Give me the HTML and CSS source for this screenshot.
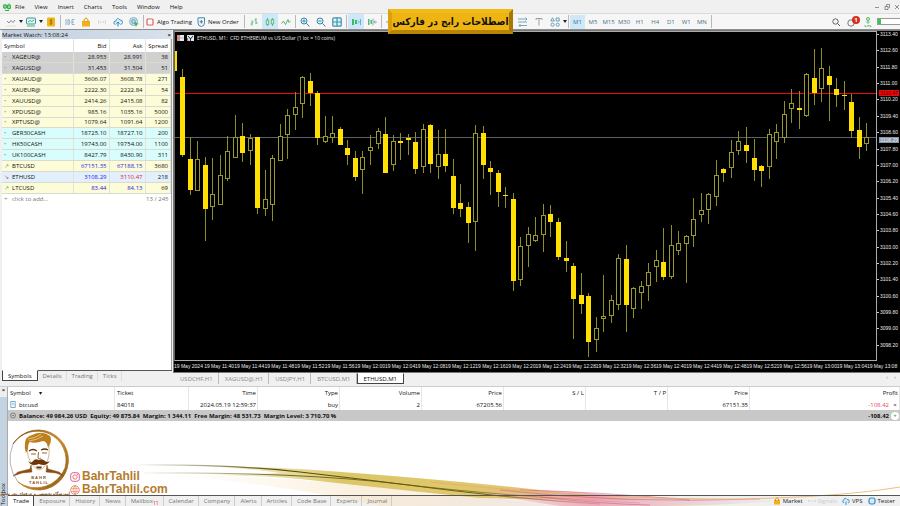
FILE: index.html
```html
<!DOCTYPE html>
<html lang="en">
<head>
<meta charset="utf-8">
<title>Trading terminal</title>
<link rel="stylesheet" href="styles.css">
</head>
<body>
<div class="app">
  <nav class="menubar">
    <svg class="ico" viewBox="0 0 10 10"><path d="M3 2v5M1.500 3h3v3h-3zM7 1.500v6M5.500 3h3v3.500h-3z" fill="none" stroke="#35b34a"/><path d="M3 8.500h4" stroke="#35b34a"/></svg>
    <button>File</button><button>View</button><button>Insert</button><button>Charts</button><button>Tools</button><button>Window</button><button>Help</button>
    <span class="grow"></span>
    <div class="winbtns">
      <button aria-label="Minimize"><svg viewBox="0 0 6 6"><path d="M1 3.500h4"/></svg></button>
      <button aria-label="Restore"><svg viewBox="0 0 6 6"><path d="M1 2.500h3v3h-3zM2.500 2v-1.500h3v3h-1"/></svg></button>
      <button aria-label="Close"><svg viewBox="0 0 6 6"><path d="M1 1l4 4M5 1l-4 4"/></svg></button>
    </div>
  </nav>

  <div class="toolbar">
    <button class="tb" aria-label="Line style"><svg class="ico" viewBox="0 0 10 10"><path d="M1 4l2 2 2-2.500 2 2L9 3" fill="none" stroke="#7c8a94"/><path d="M0 9h10" stroke="#dde3e6"/></svg></button>
    <span class="caret"></span>
    <button class="tb" aria-label="Chart window"><svg class="ico" viewBox="0 0 10 10"><rect x=".5" y="1" width="9" height="6" rx="1" fill="#e2f3f4" stroke="#3f93a5"/><path d="M2 5l2-1.500 1.500 1L8 3" fill="none" stroke="#45b36b"/><path d="M1 9h8" stroke="#45b36b"/></svg></button>
    <span class="caret"></span>
    <button class="tb" aria-label="Quotes"><svg class="ico" viewBox="0 0 10 10"><rect x="1" y=".5" width="8" height="9" rx="1" fill="#f2b417"/><path d="M6.500 3h-2q-1 1 0 1.800h1q1.200 1 0 2H3.500M5 2v6" fill="none" stroke="#9a6700" stroke-width=".8"/></svg></button>
    <span class="sep"></span>
    <button class="tb" aria-label="IDE"><svg class="ico" viewBox="0 0 10 10"><path d="M1 2v6M3 2.500v5h1q2-2.500 0-5zM9.500 2.500h-2.500v5h2.500M7 5h2" fill="none" stroke="#82a9c4" stroke-width=".9"/></svg></button>
    <button class="tb" aria-label="Market"><svg class="ico" viewBox="0 0 10 10"><path d="M1 4h8v5.500h-8z" fill="#f2b11a"/><path d="M3 5V3q2-4 4 0v2" fill="none" stroke="#d9940b"/></svg></button>
    <button class="tb" aria-label="Signals"><svg class="ico" viewBox="0 0 10 10"><path d="M2 3q-1.500 2 0 4M8 3q1.500 2 0 4M3.800 4q-.7 1 0 2M6.200 4q.7 1 0 2" fill="none" stroke="#c9ced1" stroke-width=".8"/></svg></button>
    <button class="tb" aria-label="VPS"><svg class="ico" viewBox="0 0 10 10"><path d="M2.500 7.500Q0 7 1 4.800 2 4 3 4 4-.5 7 3q3 0 2.500 2.500-.5 2-2 2" fill="#d6eefb" stroke="#4a9ac4"/><path d="M5 9.500V5M3.500 6.500L5 5l1.500 1.500" fill="none" stroke="#2f84b3"/></svg></button>
    <button class="tb" aria-label="Community"><svg class="ico" viewBox="0 0 10 10"><circle cx="4.500" cy="4.500" r="4" fill="#c9e1ee" stroke="#8ab3c9"/><circle cx="4.500" cy="4.500" r="1.800" fill="none" stroke="#5a94b5"/><path d="M5 5l5 2-2 .6L7 10z" fill="#36b24a"/></svg></button>
    <span class="sep"></span>
    <button class="tb-text"><svg class="ico" viewBox="0 0 10 10"><rect x="2" y="2" width="6" height="6" rx="1" fill="#fff" stroke="#df6157" stroke-width="1.200"/></svg>Algo Trading</button>
    <button class="tb-text"><svg class="ico" viewBox="0 0 10 10"><path d="M2 .8h6.500v5q0 3.500-3.200 3.700Q2 9 2 6z" fill="#eef7fb" stroke="#4c87a5"/><path d="M5.300 3v3.500M3.600 4.800h3.400" stroke="#3c7d9e"/></svg>New Order</button>
    <span class="sep"></span>
    <button class="tb" aria-label="Bar chart"><svg class="ico" viewBox="0 0 10 10"><path d="M3 3.500v5M1.500 7H3M3 5h1.500M7 1v6M5.500 3H7M7 6h1.500" fill="none" stroke="#5bb377" stroke-width=".9"/></svg></button>
    <button class="tb on" aria-label="Candles"><svg class="ico" viewBox="0 0 10 10"><path d="M2.500 1v8M7.500 1v8" stroke="#4cab6c" stroke-width=".8"/><path d="M1.300 3h2.400v4.500H1.300zM6.300 2.500h2.400V7H6.300z" fill="#c8f0d8" stroke="#4cab6c" stroke-width=".8"/></svg></button>
    <button class="tb" aria-label="Line chart"><svg class="ico" viewBox="0 0 10 10"><path d="M.5 6.500L2.500 4l2 3.500L7 2.500l1 3L9.500 4" fill="none" stroke="#5bb377"/></svg></button>
    <span class="sep"></span>
    <button class="tb" aria-label="Zoom in"><svg class="ico" viewBox="0 0 10 10"><circle cx="4" cy="4" r="3" fill="#dff1fa" stroke="#3c86ad"/><path d="M6.300 6.300L9.500 9.500M2.500 4h3M4 2.500v3" stroke="#3c86ad"/></svg></button>
    <button class="tb" aria-label="Zoom out"><svg class="ico" viewBox="0 0 10 10"><circle cx="4" cy="4" r="3" fill="#dff1fa" stroke="#3c86ad"/><path d="M6.300 6.300L9.500 9.500M2.500 4h3" stroke="#3c86ad"/></svg></button>
    <button class="tb" aria-label="Tile"><svg class="ico" viewBox="0 0 10 10"><rect x=".8" y=".8" width="8.400" height="8.400" rx="1" fill="#dff1fa" stroke="#3d93a8" stroke-width="1.200"/><path d="M5 1v8M1 5h8" stroke="#3d93a8" stroke-width="1.200"/></svg></button>
    <span class="sep"></span>
    <button class="tb on" aria-label="Auto scroll"><svg class="ico" viewBox="0 0 10 10"><path d="M1 2h2v6H1zM4 3h2v4H4z" fill="#3fb865"/><path d="M7 3.500L8.500 5 7 6.500M9.500 2v6" fill="none" stroke="#5a9fb9" stroke-width=".8"/></svg></button>
    <button class="tb" aria-label="Chart shift"><svg class="ico" viewBox="0 0 10 10"><path d="M1 2h1.500v6H1zM3.500 3H5v4H3.500z" fill="#56bb75"/><path d="M6 1.500v7M10 5H7M8.300 3.500L7 5l1.300 1.500" fill="none" stroke="#7a9aa6" stroke-width=".8"/></svg></button>
    <span class="sep"></span>
    <button class="tb" aria-label="Indicators"><svg class="ico" viewBox="0 0 10 10"><path d="M2 2h8v6H2z" fill="#f3b61c"/><path d="M0 5h2" stroke="#999"/></svg></button>
    <div class="objects">
      <button class="tb" aria-label="Levels"><svg class="ico" viewBox="0 0 10 10"><path d="M0 2h9M0 5h9M1 8.500h8M7.500.5L9 2 7.500 3.500M2.500 7L1 8.500 2.500 10" fill="none" stroke="#6f9cb2" stroke-width=".9"/></svg></button>
      <button class="tb" aria-label="Text"><svg class="ico" viewBox="0 0 10 10"><path d="M2 3V1.500h6V3M5 1.500V8.500" fill="none" stroke="#8d9aa2" stroke-width=".9"/></svg></button>
      <button class="tb" aria-label="Shapes"><svg class="ico" viewBox="0 0 10 10"><path d="M2.500.8L4.300 4H.7zM6.200 1h3v3h-3z" fill="none" stroke="#6099b2" stroke-width=".9"/><circle cx="2.500" cy="7.700" r="1.600" fill="none" stroke="#6099b2" stroke-width=".9"/><circle cx="7.700" cy="7.700" r="1.600" fill="none" stroke="#6099b2" stroke-width=".9"/></svg></button>
    </div>
    <span class="caret"></span>
    <span class="sep"></span>
    <div class="frames">
      <button class="on">M1</button><button>M5</button><button>M15</button><button>M30</button><button>H1</button><button>H4</button><button>D1</button><button>W1</button><button>MN</button>
    </div>
    <span class="sep"></span>
    <span class="grow"></span>
    <button class="tb" aria-label="Search"><svg class="ico" viewBox="0 0 10 10"><circle cx="4.500" cy="4.500" r="2.700" fill="none" stroke="#555" stroke-width=".9"/><path d="M6.500 6.500L9 9" stroke="#555"/></svg></button>
    <button class="tb bell" aria-label="Notifications"><svg class="ico" viewBox="0 0 10 10"><circle cx="4" cy="6" r="3.200" fill="none" stroke="#777"/></svg><span class="badge">1</span></button>
    <button class="tb" aria-label="Level"><svg class="ico" viewBox="0 0 10 10"><circle cx="5" cy="2" r="1.500" fill="none" stroke="#4db562"/><path d="M5 3v3M3 4.500l2 2 2-2M2 8v1.500h1.500M4.500 8l.7 1.500L6 8M7 8v1.500h1.500" fill="none" stroke="#4db562" stroke-width=".8"/></svg></button>
    <div class="meter"><span></span></div>
  </div>

  <main class="main">
    <section class="watch">
      <div class="watch-title"><span>Market Watch: 13:08:24</span><button class="x" aria-label="Close">×</button></div>
      <div class="watch-body">
        <table class="quotes">
          <colgroup><col class="c-sym"><col class="c-val"><col class="c-val"><col class="c-spr"></colgroup>
          <thead><tr><th>Symbol</th><th>Bid</th><th>Ask</th><th>Spread</th></tr></thead>
          <tbody>
            <tr class="metal"><td><i>•</i>XAGEUR@</td><td>28.953</td><td>28.991</td><td>38</td></tr>
            <tr class="metal"><td><i>•</i>XAGUSD@</td><td>31.453</td><td>31.504</td><td>51</td></tr>
            <tr class="gold"><td><i>•</i>XAUAUD@</td><td>3606.07</td><td>3608.78</td><td>271</td></tr>
            <tr class="gold"><td><i>•</i>XAUEUR@</td><td>2222.30</td><td>2222.84</td><td>54</td></tr>
            <tr class="gold"><td><i>•</i>XAUUSD@</td><td>2414.26</td><td>2415.08</td><td>82</td></tr>
            <tr class="gold"><td><i>•</i>XPDUSD@</td><td>985.16</td><td>1035.16</td><td>5000</td></tr>
            <tr class="gold"><td><i>•</i>XPTUSD@</td><td>1079.64</td><td>1091.64</td><td>1200</td></tr>
            <tr class="index"><td><i>•</i>GER30CASH</td><td>18725.10</td><td>18727.10</td><td>200</td></tr>
            <tr class="index"><td><i>•</i>HK50CASH</td><td>19743.00</td><td>19754.00</td><td>1100</td></tr>
            <tr class="index"><td><i>•</i>UK100CASH</td><td>8427.79</td><td>8430.90</td><td>311</td></tr>
            <tr class="gold"><td><i class="up">↗</i>BTCUSD</td><td class="blue">67151.35</td><td class="blue">67188.15</td><td>3680</td></tr>
            <tr class="sel"><td><i class="down">↘</i>ETHUSD</td><td class="blue">3108.29</td><td class="red">3110.47</td><td>218</td></tr>
            <tr class="gold"><td><i class="up">↗</i>LTCUSD</td><td class="blue">83.44</td><td class="blue">84.13</td><td>69</td></tr>
            <tr class="add"><td colspan="2"><i class="up">+</i>click to add...</td><td colspan="2">13 / 245</td></tr>
          </tbody>
        </table>
      </div>
      <div class="watch-tabs"><button class="on">Symbols</button><button>Details</button><button>Trading</button><button>Ticks</button></div>
    </section>

    <section class="chart-side">
      <div class="chart">
        <div class="plot">
          <svg id="plot" viewBox="175 32 701 328" preserveAspectRatio="none"></svg>
          <div class="chart-title">
            <svg viewBox="0 0 7 6"><path d="M0 0h7v6H0z" fill="#d9eef8"/><path d="M0 0h3v6H0z" fill="#e58d7b"/><path d="M0 3h7" stroke="#888" stroke-width=".5"/></svg>
            <svg viewBox="0 0 7 6"><path d="M0 0h7v6H0z" fill="#dfeaf0"/><path d="M1 1l2.500 3L6 1M3.500 3v3" fill="none" stroke="#234" stroke-width="1"/><path d="M0 3l1 3" stroke="#c33"/></svg>
            <span>ETHUSD, M1:&nbsp; CFD ETHEREUM vs US Dollar (1 lot = 10 coins)</span>
          </div>
        </div>
        <div class="prices"><div class="price-list" id="prices"></div><span class="tag ask">3110.47</span><span class="tag bid">3108.29</span></div>
        <div class="times" id="times"></div>
      </div>
      <div class="chart-tabs"><button>USDCHF,H1</button><button>XAGUSD@,H1</button><button>USDJPY,H1</button><button>BTCUSD,M1</button><button class="on">ETHUSD,M1</button><span class="grow"></span><span class="pager">‹&nbsp;&nbsp;&nbsp;&nbsp;›</span></div>
    </section>
  </main>

  <section class="toolbox">
    <div class="strip"><button class="x" aria-label="Close toolbox">×</button><span>Toolbox</span></div>
    <div class="tool-main">
      <table class="trades">
        <colgroup><col class="w108"><col class="w74"><col class="w69"><col class="w82"><col class="w82"><col class="w82"><col class="w82"><col class="w82"><col class="w82"><col></colgroup>
        <thead><tr><th class="l">Symbol<span class="sort">▾</span></th><th class="l">Ticket</th><th>Time</th><th>Type</th><th>Volume</th><th>Price</th><th>S / L</th><th>T / P</th><th>Price</th><th>Profit</th></tr></thead>
        <tbody>
          <tr><td class="l"><svg class="doc" viewBox="0 0 6 8"><path d="M.5.500h5v7h-5zM3 2v3" fill="#fff" stroke="#5aa0c8"/></svg>btcusd</td><td class="l">84018</td><td>2024.05.19 12:59:37</td><td>buy</td><td>2</td><td>67205.56</td><td></td><td></td><td>67151.35</td><td class="pl"><span class="loss">-108.42</span><button aria-label="Close position">×</button></td></tr>
          <tr class="balance"><td class="l" colspan="9"><svg class="doc" viewBox="0 0 6 6"><circle cx="3" cy="3" r="2.500" fill="none" stroke="#666" stroke-width=".7"/><path d="M1.800 3h2.400" stroke="#666" stroke-width=".7"/></svg>Balance: 49 984.26 USD&nbsp; Equity: 49 875.84&nbsp; Margin: 1 344.11&nbsp; Free Margin: 48 531.73&nbsp; Margin Level: 3 710.70 %</td><td class="pl"><span>-108.42</span><button class="plus" aria-label="Add">+</button></td></tr>
        </tbody>
      </table>
      <div class="tool-tabs">
        <button class="on">Trade</button><button>Exposure</button><button>History</button><button>News</button><button>Mailbox<sub>11</sub></button><button>Calendar</button><button>Company</button><button>Alerts</button><button>Articles</button><button>Code Base</button><button>Experts</button><button>Journal</button>
        <span class="grow"></span>
        <a href="#"><svg viewBox="0 0 8 8"><path d="M1 3h6v4.500H1z" fill="#f2b11a"/><path d="M2.500 4V2q1.500-2.500 3 0v2" fill="none" stroke="#d9940b"/></svg>Market</a>
        <a href="#" class="off"><svg viewBox="0 0 8 8"><path d="M1 3q-1 1 0 2M3 3.500v1M5 3.500v1M7 3q1 1 0 2" fill="none" stroke="#ccc"/></svg>Signals</a>
        <a href="#"><svg viewBox="0 0 8 8"><path d="M2 6Q0 5.500 1 3.800 3-.5 5 2.500q3 0 2.300 2.200Q7 6 6 6" fill="#d6eefb" stroke="#3f8fc0" stroke-width=".9"/><path d="M4 8V4.500" stroke="#3f8fc0"/></svg>VPS</a>
        <a href="#"><svg viewBox="0 0 8 8"><rect x="1" y="1" width="6" height="6" rx="2" fill="#d4ebf8" stroke="#338cc4" stroke-width="1.200"/></svg>Tester</a>
      </div>
    </div>

    <svg class="swoosh" viewBox="0 420 900 86" preserveAspectRatio="none">
      <defs>
        <linearGradient id="g1"><stop offset="0" stop-color="#e3cf80" stop-opacity="0"/><stop offset=".35" stop-color="#dcc666"/><stop offset=".75" stop-color="#dcc265" stop-opacity=".9"/><stop offset="1" stop-color="#e9a49a" stop-opacity=".3"/></linearGradient>
        <linearGradient id="g2"><stop offset="0" stop-color="#f2a7a0" stop-opacity="0"/><stop offset=".4" stop-color="#ea8f9f" stop-opacity=".7"/><stop offset="1" stop-color="#e3a2a0" stop-opacity="0"/></linearGradient>
        <linearGradient id="g3" gradientUnits="userSpaceOnUse" x1="130" x2="640"><stop offset="0" stop-color="#5b5711" stop-opacity="0"/><stop offset=".3" stop-color="#4d4b0c"/><stop offset=".7" stop-color="#75650f"/><stop offset="1" stop-color="#c0607c" stop-opacity=".5"/></linearGradient>
        <linearGradient id="g4"><stop offset="0" stop-color="#f8ead0" stop-opacity="0"/><stop offset=".5" stop-color="#f8e6c8" stop-opacity=".6"/><stop offset="1" stop-color="#f8ded0" stop-opacity=".4"/></linearGradient>
      </defs>
      <path d="M170 475Q300 476 500 499L560 506H380Q280 484 170 475z" fill="url(#g4)"/>
      <path d="M180 466Q250 466 300 469Q430 478 540 490L640 500Q560 500 480 498Q400 490 300 479Q270 476 200 475Q260 474 280 473Q240 467 180 466z" fill="url(#g1)"/>
      <path d="M130 465Q230 464 300 472T440 489T600 504" fill="none" stroke="url(#g3)" stroke-width="1.200"/>
      <path d="M144 473Q300 472 400 484T640 503" fill="none" stroke="url(#g3)" stroke-width=".8"/>
      <path d="M460 487Q540 489 600 494Q690 500 790 500Q720 506 660 506H560Q510 500 460 487z" fill="url(#g2)"/>
      <path d="M500 490Q620 504 760 499M520 490Q600 492 690 500M540 497Q600 504 650 505" fill="none" stroke="#c94f78" stroke-width=".8" stroke-opacity=".6"/>
      <path d="M430 482Q600 500 740 499Q840 497 900 487" fill="none" stroke="#e6b25c" stroke-width="1" stroke-opacity=".8"/>
    </svg>

    <div class="brand">
      <svg class="face" viewBox="0 0 62 62">
        <defs><linearGradient id="ring" x1="0" y1="0" x2="1" y2="1"><stop offset="0" stop-color="#7d4308"/><stop offset=".5" stop-color="#c98d2c"/><stop offset="1" stop-color="#8d5312"/></linearGradient></defs>
        <path d="M5 15A30 30 0 1 1 10 53A31 31 0 0 0 57 39A29 29 0 0 0 5 15z" fill="url(#ring)" stroke="url(#ring)" stroke-width=".8"/>
        <path d="M5 15Q-3 35 10 53" fill="none" stroke="#444" stroke-width=".4"/>
        <path d="M17 14Q17 8 24 6Q34 1 42 7Q44 10 42 15L40 19Q39 12 35 12Q27 15 22 13Q20 14 20 20L18 24Q16 19 17 14z" fill="#bd7e1e"/>
        <path d="M21 12Q29 11 35 7M20 10Q28 9 33 5" fill="none" stroke="#f5dca0" stroke-width=".7"/>
        <path d="M19 18Q19 28 23 34Q27 40 31 41Q36 40 38 35Q42 28 41 17" fill="none" stroke="#b98a4c" stroke-width=".6"/>
        <path d="M21 22q4-3 8 0M33 21q4-2 7 0" fill="none" stroke="#5b3208" stroke-width="1.300"/>
        <path d="M23 25h5M34 24h5M30.500 23l-.5 6q1 1.500 3 0" fill="none" stroke="#8d5615" stroke-width=".9"/>
        <path d="M31 31Q27 29 25 32Q23 35 20 32Q23 38 31 35Q38 38 42 32Q39 34 37 32Q34 29 31 31z" fill="#6b370a"/>
        <path d="M28 37.500h6l-1 2h-4z" fill="#6b370a"/>
        <path d="M23 36L22 40L10 43L5 47L14 44L24 43zM39 36L40 40L51 43L56 47L48 44L38 43z" fill="#8a4d14" stroke="#8a4d14" stroke-width=".5"/>
      </svg>
      <div class="face-name"><b>BAHR</b><b>TAHLIL</b></div>
      <div class="face-tag" lang="fa" dir="rtl">آموزشگاه تخصصی و حرفه‌ای بحر تحلیل</div>
    </div>
    <div class="links">
      <a href="#"><svg viewBox="0 0 10 10"><rect x=".7" y=".7" width="8.600" height="8.600" rx="2.500" fill="none" stroke="#dc5a9a"/><circle cx="5" cy="5" r="2.200" fill="none" stroke="#ea7a6a"/><circle cx="7.500" cy="2.500" r=".6" fill="#b74bc9"/></svg>BahrTahlil</a>
      <a href="#"><svg viewBox="0 0 10 10"><circle cx="5" cy="5" r="4.300" fill="none" stroke="#e7835f" stroke-width=".9"/><path d="M1 3.500h8M1 6.500h8M5 .7v8.600M5 .7q-4 4.300 0 8.600M5 .7q4 4.300 0 8.600" fill="none" stroke="#e7835f" stroke-width=".6"/></svg>BahrTahlil.com</a>
    </div>
  </section>

  <div class="banner" lang="fa" dir="rtl">اصطلاحات رایج در فارکس</div>
</div>
<script src="chart.js"></script>
</body>
</html>
```
FILE: styles.css
```css
* { box-sizing: border-box; }
body {
  margin: 0;
  font: 6px/8px "Open Sans", "Noto Sans", sans-serif;
  color: #111;
  background: #f0f0f0;
}
button { appearance: none; border: 0; margin: 0; padding: 0; background: none; font: inherit; color: inherit; }
a { color: inherit; text-decoration: none; }
svg { display: block; }
.grow { flex: 1; }
.x { font-weight: bold; color: #111; }
.app { position: relative; display: grid; grid-template-rows: 13px 17px 1fr 120px; height: 100vh; overflow: hidden; }
.ico { width: 10px; height: 10px; flex: none; }

/* Menu and toolbar */
.menubar { display: flex; align-items: center; gap: 10px; padding: 0 0 0 2px; }
.menubar > .ico { margin: 0 -7px 0 0; width: 10px; }
.winbtns { display: flex; gap: 4px; }
.winbtns svg { width: 6px; height: 6px; fill: none; stroke: #777; stroke-width: .8; }

.toolbar { display: flex; align-items: center; padding-left: 3px; border-top: 1px solid #dcdcdc; border-bottom: 1px solid #8d8d8d; background: #f6f6f6; }
.tb { display: grid; place-items: center; flex: none; width: 16px; height: 15px; }
.on { background: #cde9f9; }
.caret { flex: none; width: 4px; border: 2px solid transparent; border-top: 3px solid #222; border-bottom: 0; }
.sep { flex: none; width: 1px; height: 13px; margin: 0 1px; background: #b9b9b9; }
.tb-text { display: flex; align-items: center; gap: 2px; flex: none; padding-right: 4px; }
.objects { display: flex; margin-left: 116px; }
.frames { display: grid; grid-template-columns: repeat(9, 1fr); flex: none; width: 140px; height: 14px; color: #4c7187; }
.bell { position: relative; }
.badge { position: absolute; top: 2px; right: 0; width: 8px; height: 8px; border-radius: 50%; background: #d4301c; color: #fff; font-weight: bold; text-align: center; }
.meter { width: 23px; height: 7px; margin-left: 1px; border: 1px solid #9a9a9a; border-right: 0; background: #fff; }
.meter span { display: block; width: 3px; height: 100%; background: #35c94c; }

/* Market watch */
.main { display: grid; grid-template-columns: 173px 1fr; min-height: 0; }
.watch { display: flex; flex-direction: column; padding: 0 1px 4px 2px; }
.watch-title { display: flex; justify-content: space-between; align-items: center; height: 9px; padding-right: 1px; background: linear-gradient(90deg, #c1cfdf, #d8e1ec); }
.watch-body { flex: 1; border-right: 1px solid #a0a0a0; background: #fff; }
.quotes { width: 100%; height: 165px; border-collapse: collapse; table-layout: fixed; }
.quotes th, .quotes td { padding: 0 2px; text-align: right; font-weight: normal; border-right: 1px solid #e2e2dc; white-space: nowrap; }
.quotes th { height: 13px; }
.quotes td { border-bottom: 1px solid #dadbcd; }
.quotes th:first-child, .quotes td:first-child { text-align: left; }
.quotes i { display: inline-block; width: 8px; font-style: normal; color: #999; }
.quotes i.up { color: #4aa573; }
.quotes i.down { color: #b54a6a; }
.c-sym { width: 71px; }
.c-val { width: 36px; }
.metal { background: #d0d0d0; }
.gold { background: #fdfcd8; }
.index { background: #d8fdfc; }
.sel { background: #e2effd; }
.quotes .blue { color: #2a20e0; }
.quotes .red { color: #e01630; }
.quotes .add td { border: 0; color: #777; }
.watch-tabs { display: flex; height: 12px; }
.watch-tabs button { height: 11px; padding: 0 5px; color: #777; border-top: 1px solid #555; box-shadow: inset -1px 0 #ddd; }
.watch-tabs::after { content: ""; flex: 1; border-top: 1px solid #555; }
.watch-tabs .on, .chart-tabs .on { background: #fff; color: #111; border: 1px solid #444; border-top-color: #fff; box-shadow: none; }

/* Chart */
.chart-side { display: flex; flex-direction: column; min-width: 0; }
.chart { flex: 1; display: grid; grid-template-columns: 1fr 23px; grid-template-rows: 1fr 11px; min-height: 0; background: #000; border: 1px solid #777; border-right: 0; color: #e8e8e8; font: 5px/6px "Liberation Sans", sans-serif; }
.plot { position: relative; min-height: 0; border: 1px solid #aaa; border-left-color: #666; }
.plot > svg { position: absolute; width: 100%; height: 100%; }
.chart-title { position: absolute; top: 3px; left: 2px; display: flex; align-items: center; gap: 3px; font-family: "Open Sans", sans-serif; }
.chart-title svg { width: 7px; height: 6px; }
.prices { position: relative; }
.price-list { display: flex; flex-direction: column; justify-content: space-between; height: calc(100% - 13px); }
.price-list span::before { content: ""; display: inline-block; width: 2px; height: 1px; margin-right: 1px; vertical-align: 1px; background: #ccc; }
.tag { position: absolute; left: 2px; padding: 0 1px; color: #400; }
.ask { top: 18%; background: #f00808; }
.bid { top: 32%; background: #8696a8; color: #e6edf4; }
.times { grid-column: 1 / -1; display: flex; justify-content: space-between; padding: 2px 33px 0 0; }
.times span { width: 0; white-space: nowrap; }
.chart-tabs { display: flex; height: 13px; padding: 0 0 2px 1px; color: #888; }
.chart-tabs button { padding: 0 6px; box-shadow: inset -1px 0 #bbb; }
.pager { padding-right: 4px; }
.ask-line { fill: #f00808; }
.bid-line { fill: #59626a; }
.wick { stroke: #8f8d25; stroke-width: 1; }
.hollow { fill: #000; stroke: #9a9a2c; stroke-width: 1; }
.solid { fill: #ffe000; }

/* Toolbox */
.toolbox { position: relative; display: grid; grid-template-columns: 7px 1fr; border-top: 1px solid #ccc; }
.strip { display: flex; flex-direction: column; justify-content: space-between; align-items: center; background: linear-gradient(#eee 10px, #c4d3e2 10px); }
.strip .x { line-height: 6px; }
.strip span { writing-mode: vertical-rl; transform: rotate(180deg); line-height: 7px; padding-top: 1px; }
.tool-main { display: flex; flex-direction: column; justify-content: space-between; min-width: 0; background: linear-gradient(#fff calc(100% - 11px), #f0f0f0 0); border-left: 1px solid #aaa; }
.trades { width: 100%; border-collapse: collapse; table-layout: fixed; }
.trades th, .trades td { height: 11px; padding: 0 2px; font-weight: normal; text-align: right; white-space: nowrap; }
.trades th { height: 12px; }
.trades th, .trades tr:first-child td { box-shadow: inset -1px 0 #e6e6e6; }
.trades .l { text-align: left; }
.sort { margin-left: 8px; }
.doc { display: inline-block; width: 6px; height: 7px; margin-right: 3px; vertical-align: -1px; }
.trades .balance td { background: #c8c8c8; font-weight: bold; color: #111; }
.trades .pl { padding-right: 1px; }
.pl button { width: 8px; margin-left: 2px; }
.plus { border-radius: 50%; background: #fff; color: #3bb53b; }
.loss { color: #e2485c; }
.w108 { width: 107px; }
.w74 { width: 74px; }
.w69 { width: 69px; }
.w82 { width: 82px; }
.tool-tabs { position: relative; z-index: 1; display: flex; align-items: stretch; height: 11px; border-top: 1px solid #555; color: #777; }
.tool-tabs button { padding: 0 5px; box-shadow: inset -1px 0 #ccc; }
.tool-tabs .on { background: #fff; color: #111; box-shadow: inset -1px 0 #444; }
.tool-tabs sub { font-size: 5px; line-height: 1px; color: #e12; }
.tool-tabs a { display: flex; align-items: center; gap: 2px; margin-right: 5px; color: #222; }
.tool-tabs a.off { color: #ccc; }
.tool-tabs a svg { width: 8px; height: 8px; }
.swoosh { position: absolute; left: 0; bottom: 0; width: 100%; height: 86px; pointer-events: none; }
.brand { position: absolute; z-index: 2; left: 8px; bottom: 9px; width: 62px; text-align: center; color: #8a5212; }
.face { width: 62px; height: 62px; margin-bottom: -16px; }
.face-name { display: grid; font: 4px/5px "Liberation Sans", sans-serif; margin-bottom: 5px; letter-spacing: 1px; }
.face-tag { font: bold 4px/7px "DejaVu Sans Condensed", "DejaVu Sans", sans-serif; white-space: nowrap; }
.links { position: absolute; left: 70px; bottom: 10px; display: grid; font: bold 12px/13px "Liberation Sans", sans-serif; color: #b37b2b; }
.links a { display: flex; align-items: center; gap: 2px; }
.links svg { width: 10px; height: 10px; }

.banner { position: absolute; top: 9px; left: 388px; width: 125px; border: 4px solid; border-color: #f0bb18 #a87604 #b98405 #d9a20d; background: #eeb411; color: #111; font: bold 10px/17px "DejaVu Sans Condensed", "DejaVu Sans", sans-serif; text-align: center; white-space: nowrap; }
```
FILE: chart.js
```js
// Each candle: [high, body top, body bottom, low, filled]
const candles = [
  [69,77,155,157,1],[137,159,190,195,1],[141,159,191,191,0],[157,165,209,241,1],[158,194,207,220,0],[155,175,205,205,0],
  [136,151,179,181,0],[115,137,158,158,0],[123,136,153,162,1],[134,138,151,165,0],[137,137,208,214,1],[170,199,209,216,0],
  [155,158,205,221,0],[124,136,161,161,0],[109,115,135,159,0],[92,107,115,130,0],[76,77,104,118,0],[73,81,93,106,1],
  [91,93,138,145,1],[116,136,142,143,0],[116,133,138,143,0],[127,129,145,145,1],[140,148,155,165,1],[151,158,177,181,1],
  [151,157,170,194,0],[135,147,151,165,0],[128,131,144,149,0],[117,134,173,173,1],[135,141,165,171,0],[133,141,143,160,1],
  [134,138,140,155,1],[132,142,169,174,1],[124,129,167,173,0],[124,125,164,173,1],[130,154,167,179,0],[129,154,166,172,1],
  [159,176,208,214,1],[184,203,209,217,1],[202,207,223,243,1],[125,133,222,251,0],[126,133,165,179,1],[161,168,172,195,1],
  [170,173,192,207,1],[187,195,196,208,1],[193,199,281,291,1],[237,246,280,286,0],[227,234,246,267,0],[217,235,241,242,0],
  [204,215,235,252,0],[205,214,222,237,1],[218,222,257,260,1],[241,258,261,272,1],[263,266,299,339,1],[273,295,304,314,1],
  [293,296,342,357,1],[317,328,340,352,0],[275,316,319,332,0],[295,300,316,323,0],[254,258,305,310,0],[245,259,305,332,1],
  [287,288,309,318,0],[281,286,293,309,0],[263,272,286,301,0],[250,260,267,282,0],[228,262,277,280,1],[225,245,277,279,0],
  [231,243,251,255,0],[235,236,244,283,0],[198,219,236,247,0],[193,210,215,222,0],[193,194,210,224,0],[160,175,197,206,0],
  [168,169,173,182,1],[140,152,168,178,0],[131,141,151,155,0],[127,145,151,163,1],[139,158,170,181,1],[165,166,171,187,1],
  [129,134,167,179,0],[124,132,142,159,0],[101,114,138,143,0],[89,103,109,123,0],[91,108,110,129,1],[73,74,116,117,0],
  [49,78,93,105,1],[48,68,89,102,0],[66,76,85,121,1],[78,89,95,107,1],[81,95,96,110,1],[94,102,131,138,1],
  [117,130,147,159,1],[123,137,144,151,0]
];

const parts = [
  '<rect class="ask-line" x="175" y="93" width="701" height="1"/>',
  '<rect class="bid-line" x="175" y="137" width="701" height="1"/>',
  '<rect class="solid" x="175" y="51" width="2" height="20"/>'
];
candles.forEach(([high, top, bottom, low, filled], i) => {
  const x = Math.round(182 + i * 7.52);
  parts.push(`<path class="wick" d="M${x + 0.5} ${high}V${low}"/>`);
  parts.push(filled
    ? `<rect class="solid" x="${x - 2}" y="${top}" width="5" height="${Math.max(1, bottom - top)}"/>`
    : `<rect class="hollow" x="${x - 1.5}" y="${top + 0.5}" width="4" height="${bottom - top - 1}"/>`);
});
document.getElementById('plot').innerHTML = parts.join('');

let prices = '';
for (let i = 0; i < 20; i++) prices += `<span>${(3113.4 - i * 0.8).toFixed(2)}</span>`;
document.getElementById('prices').innerHTML = prices;

let times = '<span>19 May 2024</span>';
for (let i = 0; i < 23; i++) {
  const m = 700 + i * 4;
  times += `<span>19 May ${Math.floor(m / 60)}:${String(m % 60).padStart(2, '0')}</span>`;
}
document.getElementById('times').innerHTML = times;
```
